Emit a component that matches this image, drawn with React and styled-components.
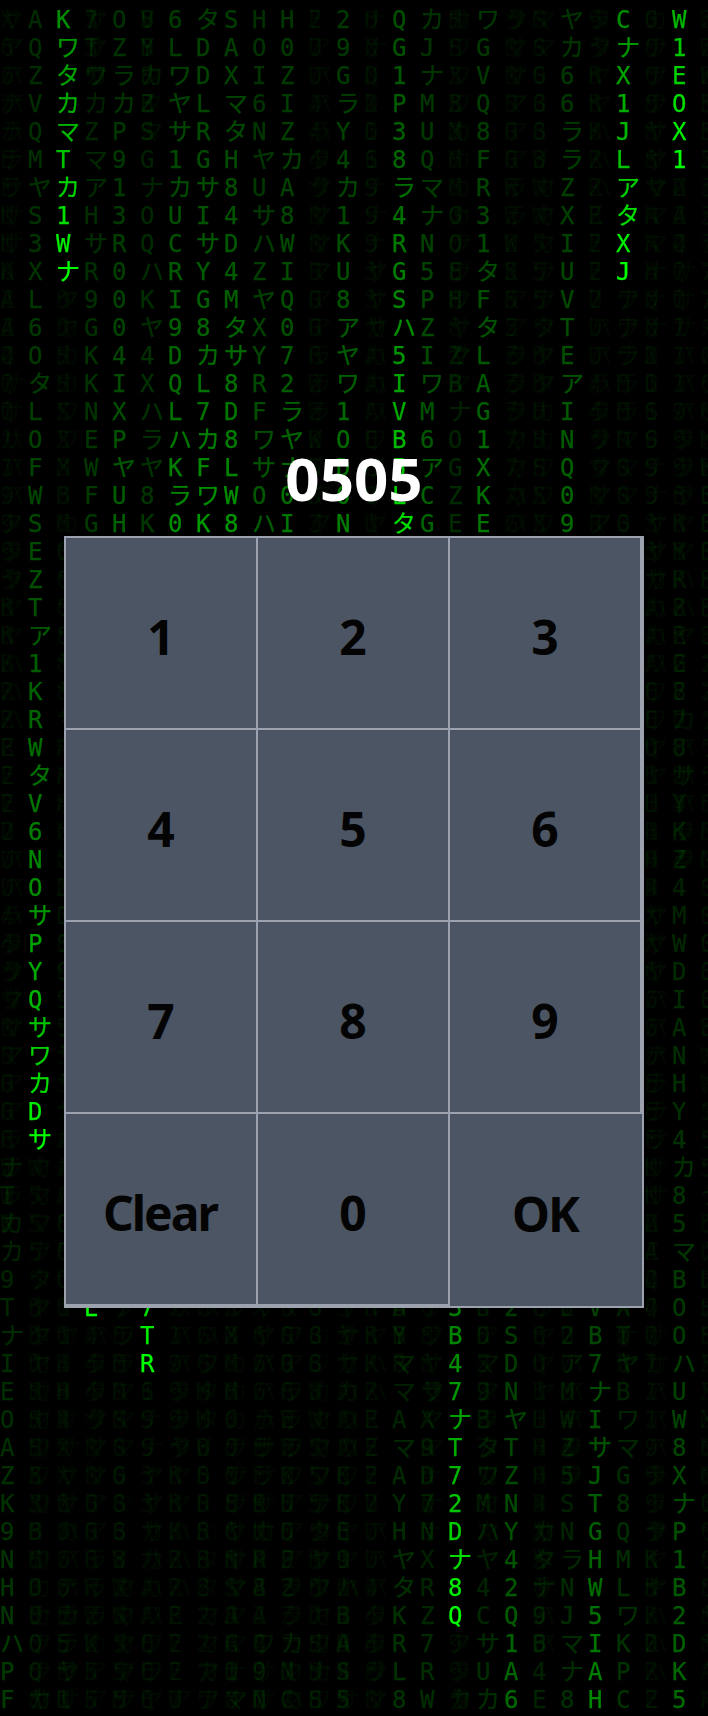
import React from "react";
import styled, { createGlobalStyle } from "styled-components";

const ROWS = 61;
const CELL = 28;

// each column: [top rows 1-19, rows 20-46, rows 47-61, head row, fade at the bottom row]
const COLUMNS = [
  ["", "ナTカカ9".padStart(27), "TナIEOAZK9NHNハPF", 0, 27],
  ["AQZVQMヤS3XL6OタLOFWS", "EZTア1KRWタV6NOサPYQサワカDサ", "ナカヤサヤカ6カBワDEQQカ", 41, 49],
  ["KワタカマTカ1Wナ", "", "ハカ Hサ  2カ 6カ5ヤ1", 10, 50],
  ["7TワカZマアHサR9GKKNEWFG", "", "Eカワ    ヤ6  カカ  ", 47, 60],
  ["OZラカP913R0004IXPヤUH", "", "V3ヤ8Z DマSY2SナマM", 35, 55],
  ["VYカZSGナOQハKヤ4Xハラヤ8K", "", "7TRY        ナラ ", 49, 60],
  ["6Lワヤサ1カUCRI9DQLハKラ0", "", "カ   R   カD    W", 28, 60],
  ["タDDLRGサIサYG8カL7カFワK", "", "        カ    カ ", 27, 60],
  ["SAXマタH84D4Mタサ8D8LW8", "", " 4 H J1ECNSJC1マ", 27, 48],
  ["HOI6NヤUサハZヤXYRFワサOハ", "", "  ハ  サ 9カP8 ワ9N", 36, 46],
  ["H0ZIZカA8WIQ072ラヤナ0I", "", " ワ9ワEワワUQP2 カNC", 31, 46],
  ["", "", " カワ ナワワサカサワ ワナ8", 0, 50],
  ["29GラY4カ1KU8アヤワ1OD0N", "", " ナ カワカKKE9ハBAS5", 30, 45],
  ["", "", " 8   58Y  9 RE ", 0, 58],
  ["QG1P38ラ4RGSハ5IVB5Lタ", "", "AYママAマAYHヤタKRL8", 21, 32],
  ["カJナMUQマナN5PZIワM6アCG", "", "   ラX9D7NXRZ7RW", 34, 38],
  ["サ  Bカ  GOEH ZBナOGZE", "", "3B47ナT72Dナ8Q  カ", 58, 50],
  ["ワGVQ8FR31タFタLAG1XKE", "", "8Oマ9BタワMハヤ4CサUカ", 31, 38],
  ["  ナ", "", "2SDNヤTZNY42Q1A6", 75, 0],
  ["", "", "        カタナ9B4E", 0, 42],
  ["ヤカ66ララZXIUVTEアINQ09", "", "D2アMWZ5SNラNJマナ8", 33, 36],
  ["", "", "VB7ナIサJTGHW5IAH", 71, 0],
  ["CナX1JLアタXJ", "", "XTヤBワマG8QMLワKPC", 10, 32],
  ["", "ナカハ8ワ8ヤカサ8ヤワ88Dナカヤ", " Kカ   ナ ナKナ D ", 0, 50],
  ["W1EOX1", "YR8ヤG8カ8サYKZ4MWDIANHY4カ85マB", "OOハUW8XナP1B2DK5", 6, 14],
  ["", "", "", 0, 45],
];

const KEYS = ["1", "2", "3", "4", "5", "6", "7", "8", "9", "Clear", "0", "OK"];
const NOISE = "アカサタナハマヤラワアカサタナハマヤラワABDEGHKMQRSUWXZ0123456789";

const GlobalStyle = createGlobalStyle`
  html,
  body {
    margin: 0;
    background: #000;
  }
`;

const Page = styled.div`
  position: relative;
  width: 708px;
  height: 1716px;
  overflow: hidden;
  background: #000;
  display: flex;
  flex-direction: column;
  align-items: center;
  padding-top: 448px;
  box-sizing: border-box;
  font-family: "Noto Sans", "Open Sans", sans-serif;
`;

const Rain = styled.div`
  position: absolute;
  inset: 0;
  display: flex;
  padding-top: 6px;
  overflow: hidden;
  color: #00ff00;
  font: 24px/28px "DejaVu Sans Mono", "Noto Sans CJK JP", monospace;
  opacity: ${(props) => props.$strength};
  filter: blur(${(props) => props.$blur}px);
  -webkit-text-stroke: ${(props) => props.$stroke}px currentColor;
`;

const RainColumn = styled.div`
  flex: none;
  width: ${CELL}px;
`;

const Glyph = styled.span`
  display: block;
  height: ${CELL}px;
  white-space: pre;
`;

const Display = styled.h1`
  position: relative;
  margin: 0 0 28px;
  color: #fff;
  font-size: 60px;
  font-weight: 700;
  line-height: 60px;
`;

const Keypad = styled.div`
  position: relative;
  display: grid;
  grid-template-columns: 192px 192px 194px;
  grid-template-rows: 192px 192px 192px 194px;
  width: 580px;
  box-sizing: border-box;
  border: 1px solid #9ca3af;
  background: #9ca3af;
`;

const Key = styled.button`
  display: flex;
  align-items: center;
  justify-content: center;
  width: ${(props) => (props.$fill ? "194px" : "192px")};
  height: ${(props) => (props.$fill ? "194px" : "192px")};
  padding: 6px 2px 0 0;
  box-sizing: border-box;
  border: 1px solid #9ca3af;
  background: #4b5563;
  color: #040404;
  font-family: inherit;
  font-size: 48px;
  font-weight: 700;
  letter-spacing: -2px;
  cursor: pointer;
`;

// the trail gets darker with every row behind the head, quickly at first
const fadeFor = (row, head, tail) => {
  const distance = row <= head ? head - row : tail + ROWS - row;
  if (distance > 40) return 0.17 * Math.pow(0.9, distance - 40);
  return 0.13 + 0.87 * Math.pow(0.925, distance);
};

const cellsOf = ([top, middle, bottom]) =>
  (top.padEnd(19) + middle.padEnd(27) + bottom.padEnd(15)).split("");

const noiseAt = (seed, col, row) => {
  const n = (col * 7919 + row * 104729 + seed * 1299709) % 2147483647;
  return NOISE[((n * 48271) % 2147483647) % NOISE.length];
};

const hiddenByKeypad = (col, row) => col > 2 && col < 23 && row > 19 && row < 47;

const GhostLayer = ({ seed, strength }) => (
  <Rain $strength={strength} $blur={0.7} $stroke={0}>
    {COLUMNS.map((column, col) => {
      const cells = cellsOf(column);
      return (
        <RainColumn key={col}>
          {cells.map((char, i) => {
            const row = i + 1;
            const bright = char !== " " && fadeFor(row, column[3], column[4]) > 0.12;
            const text = bright || hiddenByKeypad(col, row) ? " " : noiseAt(seed, col, row);
            return <Glyph key={row}>{text}</Glyph>;
          })}
        </RainColumn>
      );
    })}
  </Rain>
);

const App = () => (
  <Page>
    <GlobalStyle />
    <GhostLayer seed={3} strength={0.035} />
    <GhostLayer seed={11} strength={0.03} />
    <GhostLayer seed={29} strength={0.03} />
    <Rain $strength={1} $blur={0.4} $stroke={0.25}>
      {COLUMNS.map((column, col) => (
        <RainColumn key={col}>
          {cellsOf(column).map((char, i) => (
            <Glyph key={i} style={{ opacity: fadeFor(i + 1, column[3], column[4]) }}>
              {char}
            </Glyph>
          ))}
        </RainColumn>
      ))}
    </Rain>
    <Display>0505</Display>
    <Keypad>
      {KEYS.map((label) => (
        <Key key={label} $fill={label === "OK"}>
          {label}
        </Key>
      ))}
    </Keypad>
  </Page>
);

export default App;
